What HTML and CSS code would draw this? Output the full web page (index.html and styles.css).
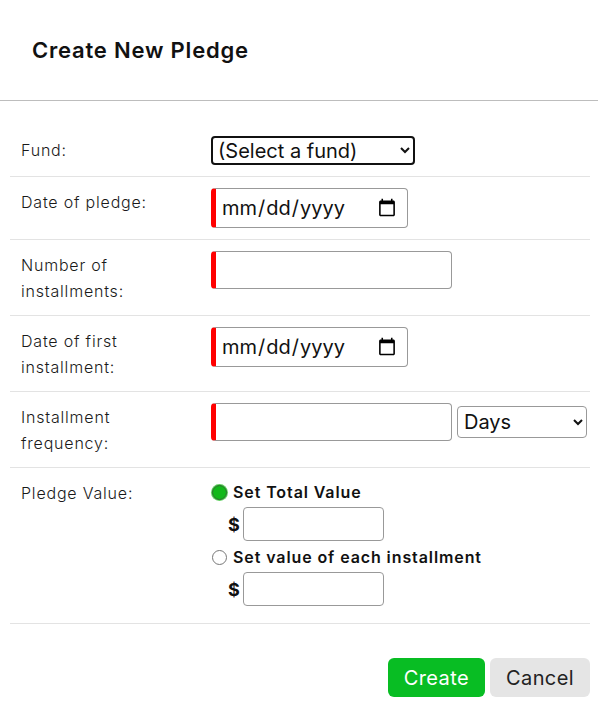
FILE: index.html
```html
<!DOCTYPE html>
<html lang="en">
<head>
<meta charset="UTF-8">
<meta name="viewport" content="width=device-width, initial-scale=1.0">
<title>Create New Pledge</title>
<link rel="stylesheet" href="styles.css">
</head>
<body>
<div class="modal">
    <div class="modal-header">
        <h2>Create New Pledge</h2>
    </div>

    <div class="modal-body">
        <table class="pledge-form">
            <tr>
                <td class="field-label">Fund:</td>
                <td class="field-value">
                    <select class="fund-select">
                        <option>(Select a fund)</option>
                    </select>
                </td>
            </tr>
            <tr>
                <td class="field-label">Date of pledge:</td>
                <td class="field-value">
                    <input type="date" class="date-input required">
                </td>
            </tr>
            <tr>
                <td class="field-label">Number of<br>installments:</td>
                <td class="field-value">
                    <input type="text" class="text-input required">
                </td>
            </tr>
            <tr>
                <td class="field-label">Date of first<br>installment:</td>
                <td class="field-value">
                    <input type="date" class="date-input required">
                </td>
            </tr>
            <tr>
                <td class="field-label">Installment<br>frequency:</td>
                <td class="field-value">
                    <div class="inline-fields">
                        <input type="text" class="text-input required">
                        <select class="unit-select">
                            <option>Days</option>
                            <option>Weeks</option>
                            <option>Months</option>
                        </select>
                    </div>
                </td>
            </tr>
            <tr>
                <td class="field-label">Pledge Value:</td>
                <td class="field-value">
                    <label class="radio-line">
                        <input type="radio" name="valueMode" checked>
                        <span>Set Total Value</span>
                    </label>
                    <div class="money-line">
                        <span>$</span>
                        <input type="text" class="money-input">
                    </div>
                    <label class="radio-line">
                        <input type="radio" name="valueMode">
                        <span>Set value of each installment</span>
                    </label>
                    <div class="money-line">
                        <span>$</span>
                        <input type="text" class="money-input">
                    </div>
                </td>
            </tr>
        </table>
    </div>

    <div class="modal-footer">
        <button class="btn btn-create">Create</button>
        <button class="btn btn-cancel">Cancel</button>
    </div>
</div>
</body>
</html>
```

FILE: styles.css
```css
body {
    font-family: Inter, "Noto Sans", sans-serif;
    background-color: #fff;
    color: #222;
    margin: 0;
    padding: 0;
}
.modal {
    width: 598px;
}
.modal-header {
    height: 100px;
    display: flex;
    align-items: center;
    padding-left: 32px;
    border-bottom: 1px solid #bdbdbd;
}
.modal-header h2 {
    margin: 0;
    font-size: 22px;
    font-weight: 600;
    color: #111;
    letter-spacing: 0.8px;
}
.modal-body {
    padding: 24px 8px 0 10px;
}
.pledge-form {
    width: 580px;
    border-collapse: collapse;
}
.pledge-form tr {
    border-bottom: 1px solid #e3e3e3;
}
.pledge-form td {
    vertical-align: top;
}
.field-label {
    width: 179px;
    padding: 12px 0 11px 11px;
    font-size: 16px;
    line-height: 26px;
    font-weight: 300;
    letter-spacing: 0.8px;
    color: #1a1a1a;
}
.field-value {
    padding: 11px 0 11px 11px;
}
.pledge-form tr:last-child .field-value {
    padding-bottom: 14px;
}
input,
select {
    font-family: Inter, "Noto Sans", sans-serif;
    font-size: 20px;
    color: #111;
    box-sizing: border-box;
    margin: 0;
    display: block;
}
.fund-select {
    width: 204px;
    height: 29px;
    border: 2px solid #111;
    border-radius: 4px;
    padding: 0 1px;
    background-color: #fff;
}
.date-input {
    width: 197px;
    height: 40px;
    border: 1px solid #999;
    border-radius: 4px;
    padding: 0 8px 0 5px;
    background-color: #fff;
}
.text-input {
    width: 241px;
    height: 38px;
    border: 1px solid #999;
    border-radius: 4px;
    background-color: #fff;
}
.required {
    border-left: 5px solid #f00;
}
.inline-fields {
    display: flex;
    align-items: center;
    gap: 5px;
}
.unit-select {
    width: 130px;
    height: 32px;
    border: 1px solid #999;
    border-radius: 4px;
    padding: 0 2px;
    background-color: #fff;
}
.radio-line {
    display: flex;
    align-items: center;
    gap: 6px;
    height: 26px;
    font-size: 16px;
    font-weight: 600;
    letter-spacing: 0.9px;
    color: #111;
}
.radio-line input {
    appearance: none;
    width: 15px;
    height: 15px;
    margin: 0 0 0 1px;
    border: 1px solid #777;
    border-radius: 50%;
    background-color: #fff;
}
.radio-line input:checked {
    background-color: #12b81a;
    border-color: #2e6b2e;
    box-shadow: 0 0 0 1px #5fd060;
}
.money-line {
    display: flex;
    align-items: center;
    gap: 3px;
    margin: 2px 0 3px 17px;
    font-size: 18px;
    font-weight: 700;
    color: #111;
}
.money-input {
    width: 141px;
    height: 34px;
    border: 1px solid #999;
    border-radius: 4px;
    background-color: #fff;
}
.modal-footer {
    display: flex;
    justify-content: flex-end;
    gap: 5px;
    padding: 34px 8px 0 0;
}
.btn {
    font-family: Inter, "Noto Sans", sans-serif;
    font-size: 20px;
    letter-spacing: 0.4px;
    height: 39px;
    border: none;
    border-radius: 6px;
    padding: 0 16px;
    cursor: pointer;
}
.btn-create {
    background-color: #08bd23;
    color: #fff;
}
.btn-cancel {
    background-color: #e5e5e5;
    color: #222;
}
```
